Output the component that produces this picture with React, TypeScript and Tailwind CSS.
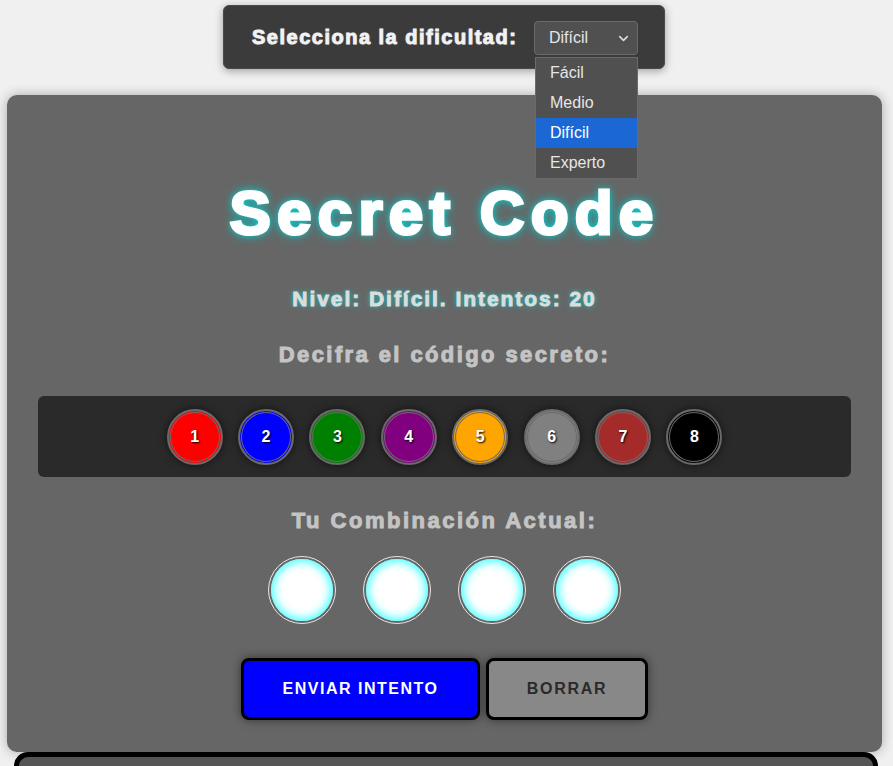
import { ChevronDown } from 'lucide-react';

const palette = [
  { n: 1, cls: 'bg-[#ff0000] shadow-[inset_0_0_0_1px_#ff0000,inset_0_0_0_2px_#6a6a6a,0_0_8px_rgba(0,0,0,0.6)]' },
  { n: 2, cls: 'bg-[#0000ff] shadow-[inset_0_0_0_1px_#0000ff,inset_0_0_0_2px_#6a6a6a,0_0_8px_rgba(0,0,0,0.6)]' },
  { n: 3, cls: 'bg-[#008000] shadow-[inset_0_0_0_1px_#008000,inset_0_0_0_2px_#6a6a6a,0_0_8px_rgba(0,0,0,0.6)]' },
  { n: 4, cls: 'bg-[#800080] shadow-[inset_0_0_0_1px_#800080,inset_0_0_0_2px_#6a6a6a,0_0_8px_rgba(0,0,0,0.6)]' },
  { n: 5, cls: 'bg-[#ffa500] shadow-[inset_0_0_0_1px_#ffa500,inset_0_0_0_2px_#6a6a6a,0_0_8px_rgba(0,0,0,0.6)]' },
  { n: 6, cls: 'bg-[#808080] shadow-[inset_0_0_0_1px_#808080,inset_0_0_0_2px_#6a6a6a,0_0_8px_rgba(0,0,0,0.6)]' },
  { n: 7, cls: 'bg-[#a52a2a] shadow-[inset_0_0_0_1px_#a52a2a,inset_0_0_0_2px_#6a6a6a,0_0_8px_rgba(0,0,0,0.6)]' },
  { n: 8, cls: 'bg-[#000000] shadow-[inset_0_0_0_1px_#000000,inset_0_0_0_2px_#6a6a6a,0_0_8px_rgba(0,0,0,0.6)]' },
];

const levels = ['Fácil', 'Medio', 'Difícil', 'Experto'];

export default function App() {
  return (
    <div className="min-h-[766px] bg-[#f0f0f0] overflow-hidden font-['Liberation_Sans',Arial,sans-serif]">
      {/* barra de dificultad */}
      <div className="pt-[5px]">
        <div className="relative z-10 ml-[223px] w-[442px] h-[64px] flex items-center pl-[28px] pr-[26px] bg-[#3b3b3b] border border-[#4a4a4a] rounded-[6px] shadow-[0_2px_8px_rgba(0,0,0,0.35)]">
          <span className="text-[20px] leading-none font-bold tracking-[1.5px] text-[#f2f2f2] [-webkit-text-stroke:0.9px_#f2f2f2] [text-shadow:0_0_2px_rgba(255,255,255,0.35)]">
            Selecciona la dificultad:
          </span>
          <div className="relative ml-auto mt-[2px]">
            <div className="w-[104px] h-[34px] flex items-center justify-between pl-[14px] pr-[6px] bg-[#505050] border border-[#6a6a6a] rounded-[4px] text-[16px] text-[#e6e6e6]">
              <span>Difícil</span>
              <ChevronDown size={15} strokeWidth={2.5} className="text-[#dddddd]" />
            </div>
            <ul className="absolute left-[1px] top-[36px] w-[103px] bg-[#505050] border border-[#6a6a6a] text-[16px] text-[#e6e6e6]">
              {levels.map((l) => (
                <li
                  key={l}
                  className={
                    'h-[30px] flex items-center pl-[14px] ' + (l === 'Difícil' ? 'bg-[#1b67d3] text-white' : '')
                  }
                >
                  {l}
                </li>
              ))}
            </ul>
          </div>
        </div>
      </div>

      {/* tablero */}
      <div className="ml-[7px] mt-[26px] w-[875px] bg-[#666666] rounded-[10px] shadow-[0_0_12px_rgba(0,0,0,0.3)] pt-[87px] pb-[32px] flex flex-col items-center">
        <h1 className="text-[62px] leading-none font-bold tracking-[6.2px] text-white [-webkit-text-stroke:3px_#ffffff] [text-shadow:0_0_6px_#00e0e0,0_0_12px_#00c8c8]">
          Secret Code
        </h1>
        <p className="mt-[44px] text-[21px] leading-none font-bold tracking-[1.95px] text-[#dddddd] [-webkit-text-stroke:0.9px_#dddddd] [text-shadow:0_0_5px_#00d8d8]">
          Nivel: Difícil. Intentos: 20
        </p>
        <h2 className="mt-[35px] text-[22px] leading-none font-bold tracking-[2.4px] text-[#c4c4c4] [-webkit-text-stroke:1px_#c4c4c4]">
          Decifra el código secreto:
        </h2>

        <div className="mt-[30px] w-[813px] h-[81px] bg-[#2a2a2a] rounded-[6px] flex items-center justify-center gap-[15.4px]">
          {palette.map((c) => (
            <div
              key={c.n}
              className={
                'w-[56px] h-[56px] rounded-full border-2 border-[#6a6a6a] flex items-center justify-center text-white text-[16px] font-bold [text-shadow:1px_1px_2px_#000] ' +
                c.cls
              }
            >
              {c.n}
            </div>
          ))}
        </div>

        <h2 className="mt-[33px] text-[22px] leading-none font-bold tracking-[2.5px] text-[#c4c4c4] [-webkit-text-stroke:1px_#c4c4c4]">
          Tu Combinación Actual:
        </h2>

        <div className="mt-[24px] flex gap-[27px]">
          {[0, 1, 2, 3].map((i) => (
            <div key={i} className="w-[68px] h-[68px] rounded-full border border-[#e6e6e6] p-[2px]">
              <div className="w-full h-full rounded-full bg-white shadow-[inset_0_0_10px_2px_#3ff]" />
            </div>
          ))}
        </div>

        <div className="mt-[34px] flex gap-[6px]">
          <button className="w-[239px] h-[62px] bg-[#0000ff] border-[3px] border-black rounded-[8px] text-white text-[16px] font-bold tracking-[1.5px] shadow-[0_0_10px_rgba(0,0,0,0.5)]">
            ENVIAR INTENTO
          </button>
          <button className="w-[162px] h-[62px] bg-[#888888] border-[3px] border-black rounded-[8px] text-[#2a2a2a] text-[16px] font-bold tracking-[1.7px] shadow-[0_0_10px_rgba(0,0,0,0.5)]">
            BORRAR
          </button>
        </div>
      </div>

      {/* historial */}
      <div className="ml-[14px] w-[864px] h-[120px] bg-[#555555] border-[5px] border-black rounded-[14px]" />
    </div>
  );
}
